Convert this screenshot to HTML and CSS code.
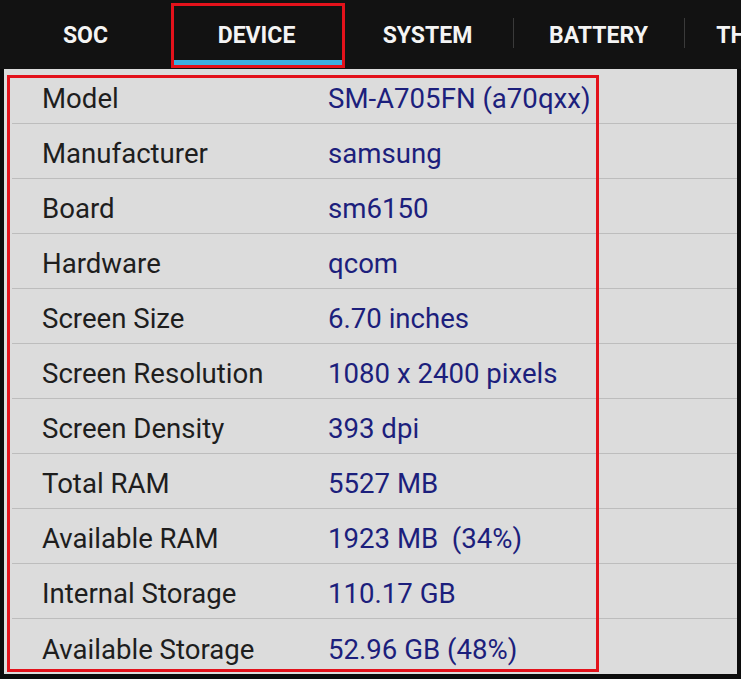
FILE: index.html
```html
<!DOCTYPE html>
<html>
    <head>
        <title>Device Info</title>
        <link rel="stylesheet" href="styles.css">
    </head>
    <body>
        <div class="screen">
            <div class="tabs">
                <div class="tab">SOC</div>
                <div class="tab active">DEVICE</div>
                <div class="tab">SYSTEM</div>
                <div class="tab">BATTERY</div>
                <div class="tab">THERMAL</div>
            </div>
            <div class="info">
                <div class="row"><span class="label">Model</span><span class="value">SM-A705FN (a70qxx)</span></div>
                <div class="row"><span class="label">Manufacturer</span><span class="value">samsung</span></div>
                <div class="row"><span class="label">Board</span><span class="value">sm6150</span></div>
                <div class="row"><span class="label">Hardware</span><span class="value">qcom</span></div>
                <div class="row"><span class="label">Screen Size</span><span class="value">6.70 inches</span></div>
                <div class="row"><span class="label">Screen Resolution</span><span class="value">1080 x 2400 pixels</span></div>
                <div class="row"><span class="label">Screen Density</span><span class="value">393 dpi</span></div>
                <div class="row"><span class="label">Total RAM</span><span class="value">5527 MB</span></div>
                <div class="row"><span class="label">Available RAM</span><span class="value">1923 MB&nbsp; (34%)</span></div>
                <div class="row"><span class="label">Internal Storage</span><span class="value">110.17 GB</span></div>
                <div class="row"><span class="label">Available Storage</span><span class="value">52.96 GB (48%)</span></div>
            </div>
            <div class="mark mark-tab"></div>
            <div class="mark mark-list"></div>
        </div>
    </body>
</html>
```

FILE: styles.css
```css
body {
    margin: 0;
    background: #0c0c0c;
    font-family: Roboto, 'Noto Sans', sans-serif;
}

.screen {
    position: relative;
    width: 741px;
    height: 679px;
    overflow: hidden;
}

.tabs {
    display: flex;
    height: 69px;
    background: #121212;
}

.tab {
    flex: 0 0 171px;
    box-sizing: border-box;
    display: flex;
    align-items: center;
    justify-content: center;
    padding-top: 2px;
    color: #f4f4f4;
    font-size: 23px;
    font-weight: 700;
    position: relative;
}

.tab + .tab::before {
    content: '';
    position: absolute;
    left: 0;
    top: 18px;
    height: 30px;
    width: 1px;
    background: #3a3a3a;
}

.tab.active::after {
    content: '';
    position: absolute;
    left: 3px;
    right: 0;
    bottom: 3px;
    height: 6px;
    background: #3cb0e2;
}

.info {
    margin: 0 4px 0 4px;
    height: 605px;
    background: #dcdcdc;
}

.row {
    display: flex;
    align-items: center;
    box-sizing: border-box;
    height: 55px;
    margin-left: 8px;
    padding: 5px 0 0 30px;
    border-bottom: 1px solid #bdbdbd;
    font-size: 27.6px;
}

.row:last-child {
    border-bottom: 0;
}

.label {
    width: 286px;
    color: #1e1e1e;
}

.value {
    color: #1c1f7c;
}

.mark {
    position: absolute;
    border: 3px solid #e3121b;
}

.mark-tab {
    left: 171px;
    top: 3px;
    width: 168px;
    height: 59px;
}

.mark-list {
    left: 7px;
    top: 75px;
    width: 586px;
    height: 591px;
}
```
